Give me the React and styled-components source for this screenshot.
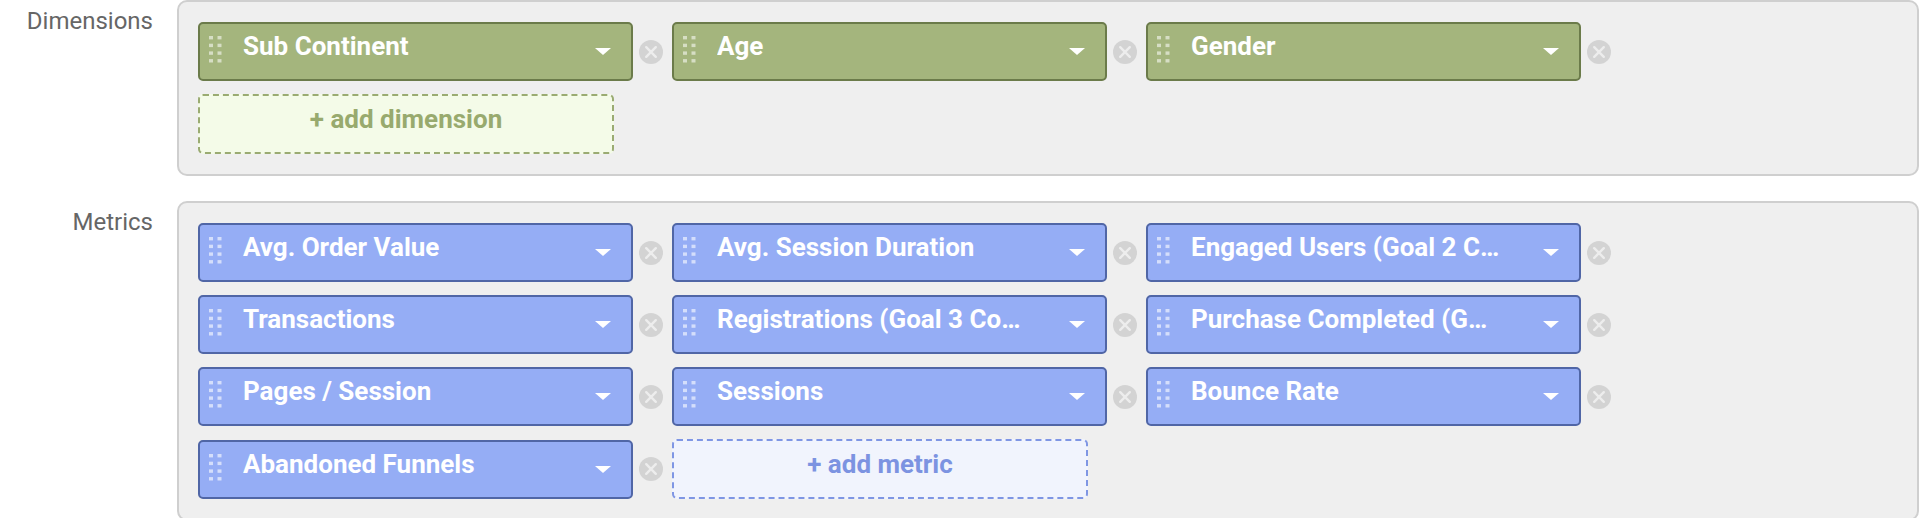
import React from "react";
import styled, { createGlobalStyle } from "styled-components";

const GlobalStyle = createGlobalStyle`
  html, body { margin: 0; padding: 0; background: #ffffff; }
  body { font-family: Roboto, "Liberation Sans", Arial, sans-serif; }
`;

const themes = {
  dimension: {
    bg: "#a4b57d",
    border: "#6b7b4a",
    dots: "rgba(255,255,255,0.55)",
    addBg: "#f4fbe8",
    addBorder: "#9aab72",
    addText: "#98aa6e",
  },
  metric: {
    bg: "#95adf5",
    border: "#5066a6",
    dots: "rgba(255,255,255,0.6)",
    addBg: "#f1f4fd",
    addBorder: "#7f96e4",
    addText: "#7c93e1",
  },
};

const Page = styled.div`
  display: grid;
  grid-template-columns: 153px 1fr;
  column-gap: 24px;
  row-gap: 25px;
  padding: 0 7px 0 0;
`;

const Label = styled.div`
  text-align: right;
  font-size: 24px;
  line-height: 28px;
  color: #666666;
  padding-top: 7px;
`;

const Panel = styled.div`
  background: #efefef;
  border: 2px solid #cfcfcf;
  border-radius: 10px;
  padding: 20px 19px;
  min-height: 0;
`;

const ChipGrid = styled.div`
  display: grid;
  grid-template-columns: repeat(3, 474px);
  row-gap: 13px;
`;

const Slot = styled.div`
  display: flex;
  align-items: center;
`;

const Chip = styled.div`
  box-sizing: border-box;
  width: 435px;
  height: 59px;
  display: flex;
  align-items: flex-start;
  padding: 7px 20px 0 9px;
  background: ${(p) => themes[p.$kind].bg};
  border: 2px solid ${(p) => themes[p.$kind].border};
  border-radius: 5px;
  color: #ffffff;
`;

const Grip = styled.svg`
  flex: none;
  margin-top: 5px;
  margin-right: 21px;
`;

const ChipText = styled.div`
  flex: 0 0 310px;
  width: 310px;
  font-size: 26px;
  font-weight: 700;
  line-height: 30px;
  white-space: nowrap;
  overflow: hidden;
  text-overflow: ellipsis;
`;

const Caret = styled.svg`
  flex: none;
  margin-left: auto;
  margin-top: 17px;
`;

const Remove = styled.svg`
  flex: none;
  margin-left: 6px;
`;

const AddBox = styled.div`
  box-sizing: border-box;
  width: 416px;
  height: 60px;
  padding-top: 8px;
  text-align: center;
  font-size: 26px;
  font-weight: 700;
  line-height: 30px;
  color: ${(p) => themes[p.$kind].addText};
  background: ${(p) => themes[p.$kind].addBg};
  border: 2px dashed ${(p) => themes[p.$kind].addBorder};
  border-radius: 5px;
`;

function GripDots({ color }) {
  const dots = [];
  for (let r = 0; r < 4; r++) {
    for (let c = 0; c < 2; c++) {
      dots.push(
        <rect key={`${r}-${c}`} x={c * 8.5} y={r * 7.7} width="4" height="3.4" fill={color} />
      );
    }
  }
  return (
    <Grip width="13" height="27" viewBox="0 0 13 27">
      {dots}
    </Grip>
  );
}

function Chevron() {
  return (
    <Caret width="16" height="7" viewBox="0 0 16 7">
      <path d="M0 0 H16 L8 7 Z" fill="#ffffff" />
    </Caret>
  );
}

function RemoveIcon() {
  return (
    <Remove width="24" height="24" viewBox="0 0 24 24">
      <circle cx="12" cy="12" r="12" fill="#d3d3d3" />
      <path d="M7.2 7.2 L16.8 16.8 M16.8 7.2 L7.2 16.8" stroke="#ededed" strokeWidth="2.4" strokeLinecap="round" />
    </Remove>
  );
}

function Item({ kind, label }) {
  return (
    <Slot>
      <Chip $kind={kind}>
        <GripDots color={themes[kind].dots} />
        <ChipText>{label}</ChipText>
        <Chevron />
      </Chip>
      <RemoveIcon />
    </Slot>
  );
}

const dimensions = ["Sub Continent", "Age", "Gender"];
const metrics = [
  "Avg. Order Value",
  "Avg. Session Duration",
  "Engaged Users (Goal 2 Completions)",
  "Transactions",
  "Registrations (Goal 3 Completions)",
  "Purchase Completed (Goal 1 Completions)",
  "Pages / Session",
  "Sessions",
  "Bounce Rate",
  "Abandoned Funnels",
];

export default function App() {
  return (
    <>
      <GlobalStyle />
      <Page>
        <Label>Dimensions</Label>
        <Panel>
          <ChipGrid>
            {dimensions.map((d) => (
              <Item key={d} kind="dimension" label={d} />
            ))}
            <Slot>
              <AddBox $kind="dimension">+ add dimension</AddBox>
            </Slot>
          </ChipGrid>
        </Panel>
        <Label>Metrics</Label>
        <Panel>
          <ChipGrid>
            {metrics.map((m) => (
              <Item key={m} kind="metric" label={m} />
            ))}
            <Slot>
              <AddBox $kind="metric">+ add metric</AddBox>
            </Slot>
          </ChipGrid>
        </Panel>
      </Page>
    </>
  );
}
